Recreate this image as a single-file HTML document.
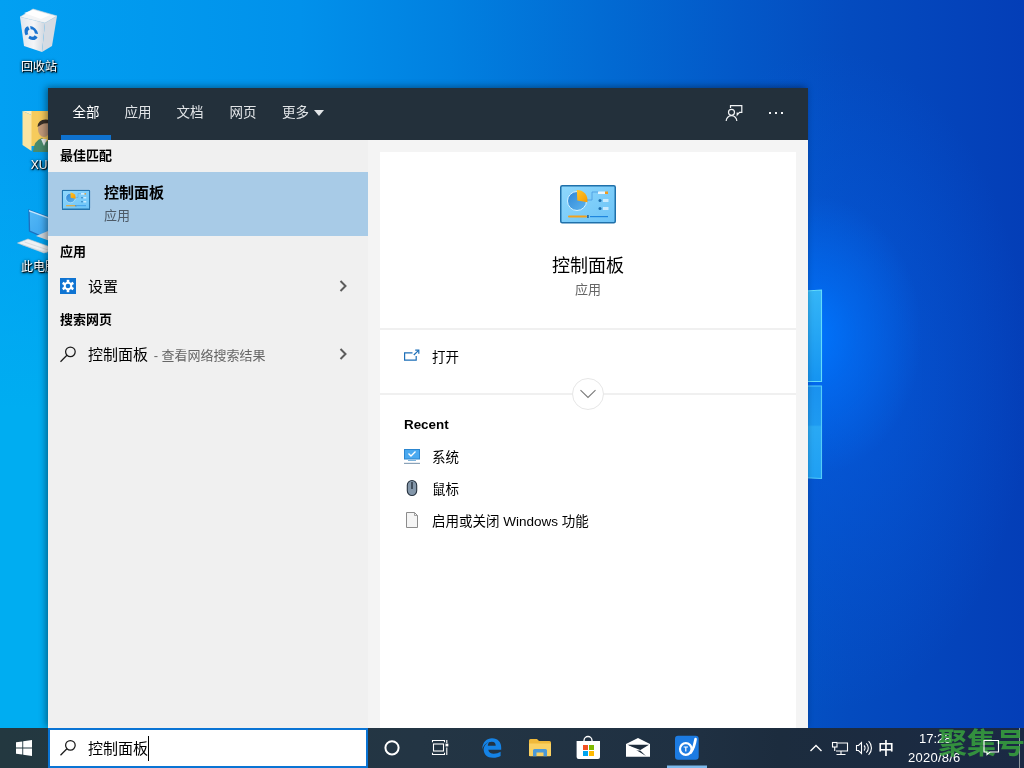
<!DOCTYPE html>
<html lang="zh-CN">
<head>
<meta charset="utf-8">
<title>控制面板 - 搜索</title>
<style>
*{box-sizing:border-box;margin:0;padding:0}
html,body{width:1024px;height:768px;overflow:hidden}
#panel,#tb,.dlab,#wm{will-change:transform}
body{position:relative;font-family:"Liberation Sans","Noto Sans CJK SC",sans-serif;font-size:14px;color:#000;background:#0652d0}
.abs{position:absolute}
#wall{position:absolute;left:0;top:0;width:1024px;height:768px;
 background:
  radial-gradient(ellipse 110px 140px at 812px 335px, rgba(0,118,255,.95), rgba(0,118,255,.5) 40%, rgba(0,118,255,0) 100%),
  radial-gradient(ellipse 200px 330px at 830px 380px, rgba(6,92,226,.7), rgba(6,92,226,0) 100%),
  linear-gradient(180deg,rgba(3,85,192,0) 0,rgba(3,85,192,0) 450px,rgba(3,88,196,.0) 768px),
  linear-gradient(90deg,#02a0f2 0px,#0199ee 150px,#0191eb 300px,#0180e0 450px,#026bd3 600px,#0358c8 740px,#044bbf 850px,#043eb7 1024px);}
#wall2{position:absolute;left:0;top:150px;width:60px;height:578px;background:linear-gradient(180deg,rgba(0,173,241,0),rgba(0,173,241,1) 45%,rgba(0,173,241,1))}
.dlab{position:absolute;color:#fff;font-size:12px;line-height:16px;text-shadow:1px 1px 1px #000,0 1px 3px rgba(0,0,0,.9),0 0 3px rgba(0,0,0,.6);white-space:nowrap;text-align:center;width:76px}
/* panel */
#panel{position:absolute;left:48px;top:88px;width:760px;height:640px;background:#f4f4f4;overflow:hidden}
#pshadow{position:absolute;left:48px;top:88px;width:760px;height:640px;box-shadow:-2px -1px 7px rgba(0,0,0,.42)}
#hdr{position:absolute;left:0;top:0;width:760px;height:52px;background:#23303b}
.tab{position:absolute;top:14.5px;width:52px;text-align:center;font-size:13.5px;color:#e2e5e8;line-height:20px;white-space:nowrap}
#left{position:absolute;left:0;top:52px;width:320px;height:588px;background:#f0f0f0}
.sec{position:absolute;left:12px;font-size:13px;font-weight:bold;color:#000;line-height:18px;white-space:nowrap}
.row{position:absolute;left:40px;font-size:15px;line-height:20px;white-space:nowrap;color:#000}
#card{position:absolute;left:332px;top:64px;width:416px;height:576px;background:#fff}
.rt{position:absolute;left:52px;font-size:13.5px;line-height:20px;white-space:nowrap;color:#000}
/* taskbar */
#tb{position:absolute;left:0;top:728px;width:1024px;height:40px;background:linear-gradient(90deg,#233840 0,#233544 420px,#1f3042 700px,#1c2c3e 780px,#1a2944 1024px)}
#sbox{position:absolute;left:48px;top:0;width:320px;height:40px;background:#fff;border:2px solid #0a74d4}
.tray{position:absolute;color:#fff;font-size:12px;white-space:nowrap}
svg{position:absolute;left:0;top:0;overflow:visible}
</style>
</head>
<body>
<div id="wall"></div>
<div id="wall2"></div>

<!-- DESKTOP-ICONS -->
<svg width="1024" height="768" viewBox="0 0 1024 768">
  <defs>
    <linearGradient id="wp1" x1="0" y1="0" x2="0" y2="1"><stop offset="0" stop-color="#35b6f7"/><stop offset="1" stop-color="#1594f1"/></linearGradient>
    <linearGradient id="wp2" x1="0" y1="0" x2="0" y2="1"><stop offset="0" stop-color="#1a92ef"/><stop offset=".42" stop-color="#1e9af1"/><stop offset=".44" stop-color="#2aa9f4"/><stop offset="1" stop-color="#1f9ff3"/></linearGradient>
    <linearGradient id="binF" x1="0" y1="0" x2="1" y2="0"><stop offset="0" stop-color="#dfe6ee"/><stop offset=".55" stop-color="#f4f5f7"/><stop offset="1" stop-color="#cfd6df"/></linearGradient>
    <linearGradient id="pcS" x1="0" y1="0" x2="1" y2="1"><stop offset="0" stop-color="#55b8f6"/><stop offset="1" stop-color="#2b9aec"/></linearGradient>
  </defs>
  <!-- window logo panes of wallpaper -->
  <g>
    <polygon points="790,292 821.500,290 821.500,381.500 790,381.500" fill="url(#wp1)" stroke="#63dcfb" stroke-width="1.100"/>
    <polygon points="790,386 821.500,386 821.500,478.500 790,477" fill="url(#wp2)" stroke="#55cdf8" stroke-width="1.100"/>
  </g>
  <!-- recycle bin -->
  <g>
    <polygon points="20,17 33,9 57,16 45,23" fill="#f2f4f6" stroke="#cfd6dd" stroke-width=".6"/>
    <polygon points="20,17 45,23 42,52 24,46" fill="url(#binF)"/>
    <polygon points="45,23 57,16 52,46 42,52" fill="#d5dbe3"/>
    <polygon points="24,13 33,10 50,15 41,19" fill="#ffffff" opacity=".9"/>
    <g transform="translate(31.3,33) skewY(14)" fill="none" stroke="#1a74d0" stroke-width="3.2">
      <circle r="5.2" stroke-dasharray="8.3 2.6" transform="rotate(-100)"/>
    </g>
  </g>
  <!-- user folder -->
  <g>
    <polygon points="31,111 60,111 60,146 31,146" fill="#f6cb5c"/>
    <polygon points="22.5,111 31.5,115 31.5,151 22.5,145" fill="#f9e4a2"/>
    <polygon points="22.5,111 31.5,111 31.5,115" fill="#fbeec0"/>
    <ellipse cx="44" cy="129" rx="6" ry="8" fill="#c29a7a"/>
    <path d="M37.5,127 q0.5,-7.5 8,-7.5 q5,0 6,4 q-7,-1 -10,1 q-2,1 -4,2.500 z" fill="#3a3128"/>
    <path d="M33,152 q1,-12 9,-14 l4,4 l4,-4 q8,2 9,14 z" fill="#4a8a6b"/>
    <polygon points="41,139 44,146 47,139" fill="#e8eef0"/>
  </g>
  <!-- this pc -->
  <g>
    <polygon points="29,210 62,222 62,245 29.500,231" fill="url(#pcS)" stroke="#1f6fbd" stroke-width="1.300"/>
    <polygon points="29,210 62,222 62,223.500 29,211.500" fill="#bfe6ff"/>
    <polygon points="36,236 50,241 62,236 48,231" fill="#cfd5db"/>
    <polygon points="17.500,243 28,239 56,249 44,253" fill="#eef1f4" stroke="#c2c9d0" stroke-width=".6"/>
    <g stroke="#c7ced5" stroke-width=".6" fill="none">
      <path d="M21,244.300 L47.500,253"/><path d="M24.500,242 L51,251"/>
    </g>
  </g>
</svg>
<!-- /DESKTOP-ICONS -->

<div class="dlab" style="left:1px;top:59px">回收站</div>
<div class="dlab" style="left:1px;top:157px">XU</div>
<div class="dlab" style="left:1px;top:259px">此电脑</div>

<div id="pshadow"></div>
<div id="panel">
  <div id="hdr">
    <div class="tab" style="left:12px;color:#fff">全部</div>
    <div class="abs" style="left:13px;top:47px;width:50px;height:5px;background:#0f72cf"></div>
    <div class="tab" style="left:64px">应用</div>
    <div class="tab" style="left:116px">文档</div>
    <div class="tab" style="left:169px">网页</div>
    <div class="tab" style="left:221.5px">更多</div>
    <div class="abs" style="left:266px;top:22px;width:0;height:0;border-left:5px solid transparent;border-right:5px solid transparent;border-top:6px solid #e2e5e8"></div>
  </div>
  <div id="left">
    <div class="sec" style="top:7px">最佳匹配</div>
    <div class="abs" style="left:0;top:32px;width:320px;height:64px;background:#a8cbe7"></div>
    <div class="abs" style="left:56px;top:42px;font-size:15px;font-weight:bold;line-height:22px">控制面板</div>
    <div class="abs" style="left:56px;top:67px;font-size:13px;line-height:18px;color:#4d5a67">应用</div>
    <div class="sec" style="top:103px">应用</div>
    <div class="row" style="top:137px">设置</div>
    <div class="sec" style="top:171px">搜索网页</div>
    <div class="row" style="top:205px">控制面板<span style="font-size:13px;color:#666;margin-left:2px"> - 查看网络搜索结果</span></div>
  </div>
  <div id="card">
    <div class="abs" style="left:0;top:101px;width:416px;text-align:center;font-size:18px;line-height:26px">控制面板</div>
    <div class="abs" style="left:0;top:128px;width:416px;text-align:center;font-size:13px;line-height:20px;color:#666">应用</div>
    <div class="abs" style="left:0;top:176px;width:416px;height:2px;background:#f0f0f0"></div>
    <div class="rt" style="top:196px">打开</div>
    <div class="abs" style="left:0;top:241px;width:416px;height:2px;background:#f0f0f0"></div>
    <div class="rt" style="left:24px;top:263px;font-weight:bold;font-size:13.4px">Recent</div>
    <div class="rt" style="top:296px">系统</div>
    <div class="rt" style="top:328px">鼠标</div>
    <div class="rt" style="top:360px">启用或关闭 Windows 功能</div>
  </div>
</div>

<div id="tb">
  <div id="sbox"><div class="abs" style="left:38px;top:9px;font-size:15px;line-height:20px;white-space:nowrap">控制面板</div>
    <div class="abs" style="left:98px;top:6px;width:1px;height:25px;background:#000"></div></div>
  <div class="tray" style="left:878px;top:10.5px;font-size:16px;line-height:20px;font-weight:500">中</div>
  <div class="tray" style="left:919px;top:3px;font-size:13px;line-height:16px">17:28</div>
  <div class="tray" style="left:908px;top:22px;font-size:13px;line-height:16px;letter-spacing:.25px">2020/8/6</div>
  <div class="abs" style="left:1019px;top:0;width:1px;height:40px;background:#8a949c"></div>
</div>

<div id="wm" class="abs" style="left:938px;top:724px;font-size:29px;line-height:40px;font-weight:bold;color:#379f3e;white-space:nowrap;opacity:.88">聚集号</div>
<!-- OVERLAY-ICONS -->
<svg width="1024" height="768" viewBox="0 0 1024 768">
  <defs>
    <linearGradient id="cpF" x1="0" y1="0" x2="1" y2="1"><stop offset="0" stop-color="#8fd8fc"/><stop offset="1" stop-color="#6cc3f7"/></linearGradient>
    <linearGradient id="pieB" x1="0" y1="0" x2="1" y2="1"><stop offset="0" stop-color="#2f86d6"/><stop offset="1" stop-color="#5db5ee"/></linearGradient>
    <linearGradient id="pieO" x1="0" y1="0" x2="1" y2="1"><stop offset="0" stop-color="#ffc62a"/><stop offset="1" stop-color="#f59a00"/></linearGradient>
    <g id="cp">
      <rect x="0.750" y="0.750" width="54.500" height="37" rx="1.500" fill="url(#cpF)" stroke="#1f70aa" stroke-width="1.500"/>
      <circle cx="17" cy="16" r="9.500" fill="url(#pieB)" stroke="#d8f2ff" stroke-width="1"/>
      <path d="M17.300,15.600 L16.800,5 A10.300,10.300 0 0 1 27.400,17.300 Z" fill="url(#pieO)"/>
      <path d="M27,15 h5 v-8 h7" fill="none" stroke="#4a9be0" stroke-width=".8"/>
      <rect x="38" y="6.500" width="7" height="2.500" fill="#e8f6ff"/>
      <rect x="45" y="6.500" width="3" height="2.500" fill="#f39a1a"/>
      <circle cx="40" cy="15.500" r="1.500" fill="#1f6fae"/><rect x="43" y="14" width="5.500" height="3" fill="#dff3ff" opacity=".8"/>
      <circle cx="40" cy="23.500" r="1.500" fill="#1f6fae"/><rect x="43" y="22" width="5.500" height="3" fill="#dff3ff" opacity=".8"/>
      <rect x="8" y="30.500" width="19" height="2" rx="1" fill="#f3a21c"/>
      <rect x="27" y="30" width="1.800" height="3" fill="#2a6fa6"/>
      <rect x="30" y="31" width="18" height="1.200" fill="#1f86de"/>
    </g>
    <g id="mag" fill="none" stroke="#1a1a1a" stroke-width="1.250">
      <circle cx="10.400" cy="5.800" r="4.800"/><path d="M6.900,9.300 L0.500,15.700"/>
    </g>
    <path id="chev" d="M0,0 L5,5 L0,10" fill="none" stroke="#5c5c5c" stroke-width="2"/>
  </defs>

  <!-- header: feedback + dots -->
  <g fill="none" stroke="#f2f4f6" stroke-width="1.200">
    <path d="M730.500,108 V105.600 H741.800 V112.400 H739.500 L737.200,115 V112.400"/>
    <circle cx="731.500" cy="112.300" r="3"/>
    <path d="M726.200,121 A5.300,5.300 0 0 1 736.800,121"/>
  </g>
  <g fill="#f2f4f6"><rect x="769" y="112" width="2" height="2"/><rect x="775" y="112" width="2" height="2"/><rect x="781" y="112" width="2" height="2"/></g>

  <!-- best match small icon -->
  <use href="#cp" transform="translate(62,190) scale(0.5)"/>
  <rect x="62.500" y="190.500" width="27" height="19" fill="none" stroke="#2474ad" stroke-width="1"/>
  <!-- big icon -->
  <use href="#cp" transform="translate(560,185)"/>

  <!-- settings -->
  <rect x="60" y="278" width="16" height="16" fill="#0f74d2"/>
  <g transform="translate(68,286)">
    <g fill="#fff">
      <circle r="4.300"/>
      <rect x="-1.300" y="-6.200" width="2.600" height="12.400"/>
      <rect x="-1.300" y="-6.200" width="2.600" height="12.400" transform="rotate(60)"/>
      <rect x="-1.300" y="-6.200" width="2.600" height="12.400" transform="rotate(120)"/>
    </g>
    <circle r="2.300" fill="#0f74d2"/>
  </g>
  <use href="#chev" transform="translate(340.500,281)"/>
  <use href="#chev" transform="translate(340.500,349)"/>
  <use href="#mag" transform="translate(60,346)"/>

  <!-- open icon -->
  <g fill="none" stroke="#1d6fb8" stroke-width="1.200">
    <path d="M412.500,352.800 H404.600 V360.200 H416.200 V356"/>
    <path d="M413.800,355 L418.600,350.400"/>
    <path d="M415.200,350.200 H418.800 V353.800"/>
  </g>
  <!-- expand circle -->
  <circle cx="588" cy="394" r="15.500" fill="#fff" stroke="#e6e6e6" stroke-width="1"/>
  <path d="M580.500,390.200 L588,397.500 L595.500,390.200" fill="none" stroke="#7a7a7a" stroke-width="1.100"/>

  <!-- recent: system -->
  <rect x="404.500" y="449.500" width="15" height="9.500" fill="#4aa9f0" stroke="#2c86cf" stroke-width="1"/>
  <path d="M408.500,453.500 L411,456 L415.500,451.500" fill="none" stroke="#fff" stroke-width="1.400"/>
  <rect x="408" y="460" width="8" height="1" fill="#7fb4dc"/>
  <rect x="404" y="462.800" width="16" height="1.200" fill="#8aa2b8"/>
  <!-- recent: mouse -->
  <rect x="407.300" y="480.500" width="9.400" height="15" rx="4.700" fill="#8497aa" stroke="#26323f" stroke-width="1.100"/>
  <path d="M412,482 V489" stroke="#1f2a36" stroke-width="1.300"/>
  <!-- recent: doc -->
  <path d="M406.500,512.500 H414.500 L417.500,515.500 V527.500 H406.500 Z" fill="#f5f5f5" stroke="#8c8c8c" stroke-width="1"/>
  <path d="M414.500,512.500 V515.500 H417.500" fill="none" stroke="#8c8c8c" stroke-width=".8"/>

  <!-- TASKBAR -->
  <!-- start -->
  <g fill="#fff">
    <polygon points="16,742.300 22.300,741.400 22.300,747.500 16,747.500"/>
    <polygon points="23.200,741.300 32,740 32,747.500 23.200,747.500"/>
    <polygon points="16,748.400 22.300,748.400 22.300,754.600 16,753.700"/>
    <polygon points="23.200,748.400 32,748.400 32,756 23.200,754.700"/>
  </g>
  <use href="#mag" transform="translate(60,739.500)"/>
  <!-- cortana -->
  <circle cx="392" cy="747.800" r="6.600" fill="none" stroke="#fff" stroke-width="2"/>
  <!-- task view -->
  <g fill="none" stroke="#fff" stroke-width="1.100">
    <rect x="433.500" y="744" width="10" height="7"/>
    <path d="M432.500,742.300 V740.500 H444.500 V742.300"/>
    <path d="M432.500,752.700 V754.500 H444.500 V752.700"/>
    <path d="M446.800,740 V743 M446.800,747.500 V755"/>
  </g>
  <rect x="445.500" y="743.600" width="2.800" height="2.800" fill="#fff"/>
  <!-- edge -->
  <path d="M482.300,749.500 C482.300,742 487,738.300 492,738.300 C498,738.300 501.200,742.500 501.200,747.500 V749.800 H488.300 C488.600,752.500 490.800,753.800 493.800,753.800 C496.300,753.800 498.600,753 500.600,751.800 V756 C498.600,757.200 496,757.800 493,757.800 C487,757.800 483.800,754.300 483.600,749.300 C483.800,746 486,743.300 489,742 C488.200,743.200 487.900,744.600 487.800,745.800 H495.700 C495.700,743.300 494.500,741.800 491.800,741.800 C487.500,741.800 483.500,744.500 482.300,749.500 Z" fill="#1583e6"/>
  <!-- explorer -->
  <g>
    <path d="M529,740.500 Q529,739 530.500,739 H537 L539,741 H549.500 Q551,741 551,742.500 V756 H529 Z" fill="#f0b93a"/>
    <path d="M529,743.500 H551 V755 Q551,756.200 549.800,756.200 H530.200 Q529,756.200 529,755 Z" fill="#fad163"/>
    <path d="M533,756.200 V750.500 Q533,749 534.500,749 H545.500 Q547,749 547,750.500 V756.200 H543.500 V752.500 H536.500 V756.200 Z" fill="#4b99d8"/>
  </g>
  <!-- store -->
  <g>
    <path d="M584,741.500 V740.500 A4,4 0 0 1 592,740.500 V741.500" fill="none" stroke="#fff" stroke-width="1.300"/>
    <path d="M576.600,741 H600 V757 Q600,759 598,759 H578.600 Q576.600,759 576.600,757 Z" fill="#fff"/>
    <rect x="583" y="745" width="5" height="5" fill="#f25022"/>
    <rect x="589" y="745" width="5" height="5" fill="#7fba00"/>
    <rect x="583" y="751" width="5" height="5" fill="#00a4ef"/>
    <rect x="589" y="751" width="5" height="5" fill="#ffb900"/>
  </g>
  <!-- mail -->
  <g>
    <polygon points="626,744 638,738 650,744 650,756.800 626,756.800" fill="#fff"/>
    <polygon points="627.500,744.800 649,744.800 640,750.200 646,756 " fill="#1f2d3c"/>
    <polygon points="626,744.500 641.500,750.500 626,750.500" fill="#fff"/>
  </g>
  <!-- app -->
  <g>
    <rect x="675" y="735.700" width="23.700" height="24" rx="3" fill="#1c7be2"/>
    <circle cx="685.800" cy="749" r="5.800" fill="none" stroke="#fff" stroke-width="2.200"/>
    <path d="M690.800,752.500 C693.500,748.500 695,743.500 695.600,739" fill="none" stroke="#fff" stroke-width="2.600" stroke-linecap="round"/>
    <path d="M683.600,747 H688 M685.800,747 V751.600" fill="none" stroke="#fff" stroke-width="1.200"/>
    <rect x="667" y="765.500" width="40" height="2.500" fill="#7db9ec"/>
  </g>
  <!-- tray chevron -->
  <path d="M810.500,751 L816,745.500 L821.500,751" fill="none" stroke="#fff" stroke-width="1.400"/>
  <!-- network -->
  <g fill="none" stroke="#fff" stroke-width="1.100">
    <path d="M837.500,743 H847.500 V751 H836"/>
    <rect x="832.500" y="742.500" width="4.500" height="4.500"/>
    <path d="M834.700,747 V751"/>
    <path d="M841,751 V754.300 M836.500,754.500 H845.500"/>
  </g>
  <!-- volume -->
  <g fill="none" stroke="#fff" stroke-width="1.100">
    <path d="M856.500,745.500 H858.500 L861.500,742.500 V753.500 L858.500,750.500 H856.500 Z"/>
    <path d="M864,745.500 A3.500,3.500 0 0 1 864,750.500"/>
    <path d="M866.300,743.300 A6.500,6.500 0 0 1 866.300,752.700"/>
    <path d="M868.600,741.200 A9.500,9.500 0 0 1 868.600,754.800"/>
  </g>
  <!-- notification -->
  <path d="M984,740.500 H998.500 V752 H990 L987,754.500 V752 H984 Z" fill="none" stroke="#fff" stroke-width="1.100"/>
</svg>
<!-- /OVERLAY-ICONS -->

</body>
</html>
